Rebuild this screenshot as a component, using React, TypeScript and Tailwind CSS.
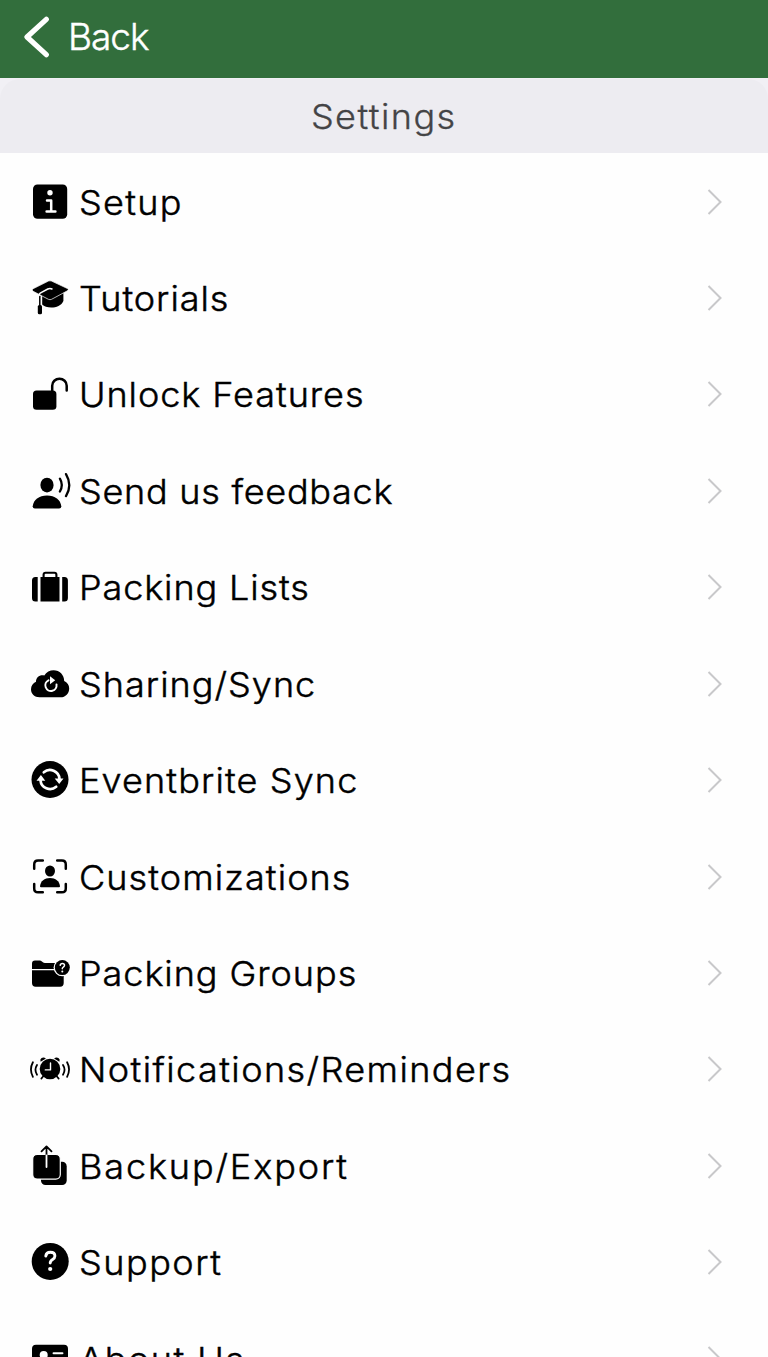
import type { ReactNode } from 'react';

type Item = { label: string; icon: ReactNode; tracking: string };

const line = { fill: 'none', strokeLinecap: 'round', strokeLinejoin: 'round' } as const;

const items: Item[] = [
  {
    label: 'Setup',
    tracking: 'tracking-[1.2px]',
    icon: (
      <>
        <rect x="5" y="4.5" width="34.2" height="34.3" rx="4.5" />
        <circle cx="22" cy="12.8" r="2.7" fill="#fff" />
        <path {...line} d="M19 20.6h4.2v11M18.6 31.6h8.8" stroke="#fff" strokeWidth="2.5" />
      </>
    ),
  },
  {
    label: 'Tutorials',
    tracking: 'tracking-[0.9px]',
    icon: (
      <>
        <path d="M14.2 19v9.5c4 4.5 18 4.5 21.2-3.5V17Z" />
        <path
          d="M20.4 5.1q1.6-.6 3.2 0l15.8 7.4q1.8 1.1 0 2.3l-15.8 8.5q-1.6.8-3.2 0L5 15.2q-1.8-1.3 0-2.4Z"
          stroke="#fff"
          strokeWidth=".7"
        />
        <path {...line} d="M24 13q-2-1-4.2 0l-7.6 4.100q-.9.600-.9 1.900v5" stroke="#fff" strokeWidth="1.500" />
        <path {...line} d="M11.800 31V20.500" stroke="#000" strokeWidth="1.500" />
        <rect x="9.800" y="29" width="4.200" height="9.300" rx="1.600" />
      </>
    ),
  },
  {
    label: 'Unlock Features',
    tracking: 'tracking-[0.88px]',
    icon: (
      <>
        <rect x="5" y="18.500" width="23.400" height="19.300" rx="3.600" />
        <path {...line} d="M24.200 20v-6.300a7.250 7 0 0 1 14.500 0v4.800" stroke="#000" strokeWidth="2.500" />
      </>
    ),
  },
  {
    label: 'Send us feedback',
    tracking: 'tracking-[0.68px]',
    icon: (
      <>
        <ellipse cx="19" cy="16.100" rx="6.600" ry="7.400" />
        <path d="M4.700 37.200C5.500 30.500 11 26.400 19 26.400s13.500 4.100 14.300 10.800q0 2.200-2.200 2.200H6.900q-2.200 0-2.200-2.200Z" />
        <path {...line} d="M31.900 9.700q3.800 6.300 0 12.800M38 5.100q6.600 11.200 0 22" stroke="#000" strokeWidth="2.300" />
      </>
    ),
  },
  {
    label: 'Packing Lists',
    tracking: 'tracking-[0.82px]',
    icon: (
      <>
        <path d="M9.700 12v24.500H7.400Q4 36.500 4 33V15.500Q4 12 7.400 12ZM34.200 12h2.300q3.400 0 3.400 3.500V33q0 3.500-3.400 3.500h-2.300ZM12.500 12h19v24.500h-19Z" />
        <path {...line} d="M15.600 13V9.800q0-2 2-2h8.800q2 0 2 2V13" stroke="#000" strokeWidth="2.100" />
      </>
    ),
  },
  {
    label: 'Sharing/Sync',
    tracking: 'tracking-[0.95px]',
    icon: (
      <>
        <path d="M11.500 35.200C6.500 35.200 3 31.700 3 27.200c0-3.400 2-6 5-7.400-.2-4.500 4.300-7.500 8.300-6.200C18.300 10 22 8.200 25.600 8.200c6 0 10.600 4.700 10.600 10.700 3 1.300 5 4 5 7.500 0 5-3.700 8.800-8.700 8.800Z" />
        <path {...line} d="M20.500 18.300a5.600 5.600 0 1 0 8 4.200" stroke="#fff" strokeWidth="2" />
        <path d="m22 14.200 5.200 4.100-5.200 4Z" fill="#fff" />
      </>
    ),
  },
  {
    label: 'Eventbrite Sync',
    tracking: 'tracking-[1.05px]',
    icon: (
      <>
        <circle cx="22" cy="21.500" r="18.500" />
        <path {...line} d="M15.800 14.300a9.600 9.600 0 0 1 15.700 6.500M28.200 28.800a9.600 9.600 0 0 1-15.700-6.500" stroke="#fff" strokeWidth="2.700" />
        <path d="M26.700 20.500h8.800l-4.300 5.600ZM8.500 22.700h8.800L12.900 17Z" fill="#fff" />
      </>
    ),
  },
  {
    label: 'Customizations',
    tracking: 'tracking-[1.02px]',
    icon: (
      <>
        <path
          {...line}
          d="M6.200 13.800v-4.400q0-3.900 3.900-3.900h4.700M29.200 5.500h4.700q3.900 0 3.900 3.900v4.400M37.800 29v4.400q0 3.900-3.900 3.900h-4.700M14.800 37.300h-4.700q-3.900 0-3.900-3.900V29"
          stroke="#000"
          strokeWidth="2.500"
        />
        <ellipse cx="22" cy="16" rx="5" ry="5.500" />
        <path d="M12 31.300C12.600 26 16.500 23 22 23s9.400 3 10 8.300q0 1-1 1H13q-1 0-1-1Z" />
      </>
    ),
  },
  {
    label: 'Packing Groups',
    tracking: 'tracking-[0.88px]',
    icon: (
      <>
        <path d="M4 18V12.600q0-3 3-3h4.700q1.300 0 2.200.8l1 .9q.8.700 2 .7h15.800q3 0 3 3v3ZM4 19.300h31.700v12.800q0 3.600-3.600 3.600H7.600Q4 35.700 4 32.100Z" />
        <circle cx="34.300" cy="16.600" r="8.700" fill="#fff" />
        <circle cx="34.300" cy="16.600" r="7.500" />
        <path {...line} d="M32.200 14.300q.2-1.900 2.200-1.900 2.100 0 2.100 1.800 0 1.100-1.100 1.800-1.100.8-1.100 1.800" stroke="#fff" strokeWidth="1.500" />
        <circle cx="34.300" cy="20.600" r="1" fill="#fff" />
      </>
    ),
  },
  {
    label: 'Notifications/Reminders',
    tracking: 'tracking-[1.32px]',
    icon: (
      <>
        <circle cx="22" cy="22" r="10.300" />
        <path d="M12.600 14.800q-1-2.500 1-3.700 2-1.300 4.300.3ZM31.400 14.800q1-2.500-1-3.700-2-1.300-4.300.3Z" />
        <path {...line} d="m15.500 29-2.200 2.600M28.500 29l2.200 2.600" stroke="#000" strokeWidth="1.700" />
        <path {...line} d="M22.500 16v6.900h-5.200" stroke="#fff" strokeWidth="1.400" />
        <path {...line} d="M9 18q-3.100 4.800 0 9.700M4.900 15.300q-3.900 7.200 0 14.500M35 18q3.100 4.800 0 9.700M39.100 15.300q3.900 7.200 0 14.500" stroke="#000" strokeWidth="1.800" />
      </>
    ),
  },
  {
    label: 'Backup/Export',
    tracking: 'tracking-[1.75px]',
    icon: (
      <>
        <rect x="13" y="17.700" width="25.700" height="23.300" rx="4.500" />
        <rect x="4.700" y="10.400" width="27.600" height="24.700" rx="4.500" stroke="#fff" strokeWidth="1.200" />
        <path {...line} d="M18.500 11V2.700M13.500 7.400l5-5 5 5" stroke="#000" strokeWidth="1.800" />
        <path {...line} d="M18.500 11.500v11.600" stroke="#fff" strokeWidth="1.800" />
      </>
    ),
  },
  {
    label: 'Support',
    tracking: 'tracking-[1.4px]',
    icon: (
      <>
        <circle cx="22.200" cy="21.400" r="18.500" />
        <path {...line} d="M17.800 16q.5-3.700 4.500-3.700 4.600 0 4.600 3.700 0 2-2.300 3.400-2.400 1.400-2.400 3.700" stroke="#fff" strokeWidth="2.900" />
        <circle cx="22.200" cy="29" r="2.100" fill="#fff" />
      </>
    ),
  },
  {
    label: 'About Us',
    tracking: 'tracking-[1.4px]',
    icon: (
      <>
        <rect x="4" y="7.800" width="36" height="29" rx="4" />
        <circle cx="15.700" cy="18" r="4" fill="#fff" />
        <path {...line} d="M25.500 16.200h9M25.500 22.500h9" stroke="#fff" strokeWidth="1.900" />
      </>
    ),
  },
];

function Row({ label, icon, tracking }: Item) {
  return (
    <li className="flex h-[96.45px] shrink-0 items-center pl-7 pr-[44px]">
      <svg viewBox="0 0 44 44" className="size-11 shrink-0">
        {icon}
      </svg>
      <span
        className={`ml-[7px] flex-1 origin-left scale-x-[1.06] pt-[2px] text-[34px] leading-none font-light whitespace-nowrap text-black [-webkit-text-stroke:0.45px_#000] ${tracking}`}
      >
        {label}
      </span>
      <svg viewBox="0 0 18 30" className="h-[30px] w-[18px] shrink-0" fill="none" stroke="#c8c8ca" strokeWidth="2">
        <path d="m2.500 3 12 12-12 12" />
      </svg>
    </li>
  );
}

export default function App() {
  return (
    <div className="flex h-[1357px] w-[768px] flex-col overflow-hidden bg-[#fefefe] font-['Inter',sans-serif]">
      <header className="flex h-[78px] shrink-0 items-center bg-[#326e3c] pb-[5px] pl-5 text-white">
        <svg viewBox="0 0 34 48" className="h-12 w-[34px]" fill="none" stroke="currentColor" strokeWidth="5.200">
          <path d="M26.300 6.300 7 24l19.300 17.700" strokeLinecap="round" strokeLinejoin="round" />
        </svg>
        <span className="ml-[14px] text-[37px] leading-none font-light tracking-[-1px] [-webkit-text-stroke:0.4px_#fff]">
          Back
        </span>
      </header>
      <div className="h-[75.300px] shrink-0 bg-[#f1f0f5] pt-px">
        <h1 className="flex h-full items-center justify-center rounded-t-[20px] bg-[#edecf1] pt-px text-[34px] leading-none font-light text-[#444446]">
          <span className="scale-x-[1.060] tracking-[1.350px] [-webkit-text-stroke:0.3px_#444446]">Settings</span>
        </h1>
      </div>
      <ul className="flex flex-col">
        {items.map((item) => (
          <Row key={item.label} {...item} />
        ))}
      </ul>
    </div>
  );
}
